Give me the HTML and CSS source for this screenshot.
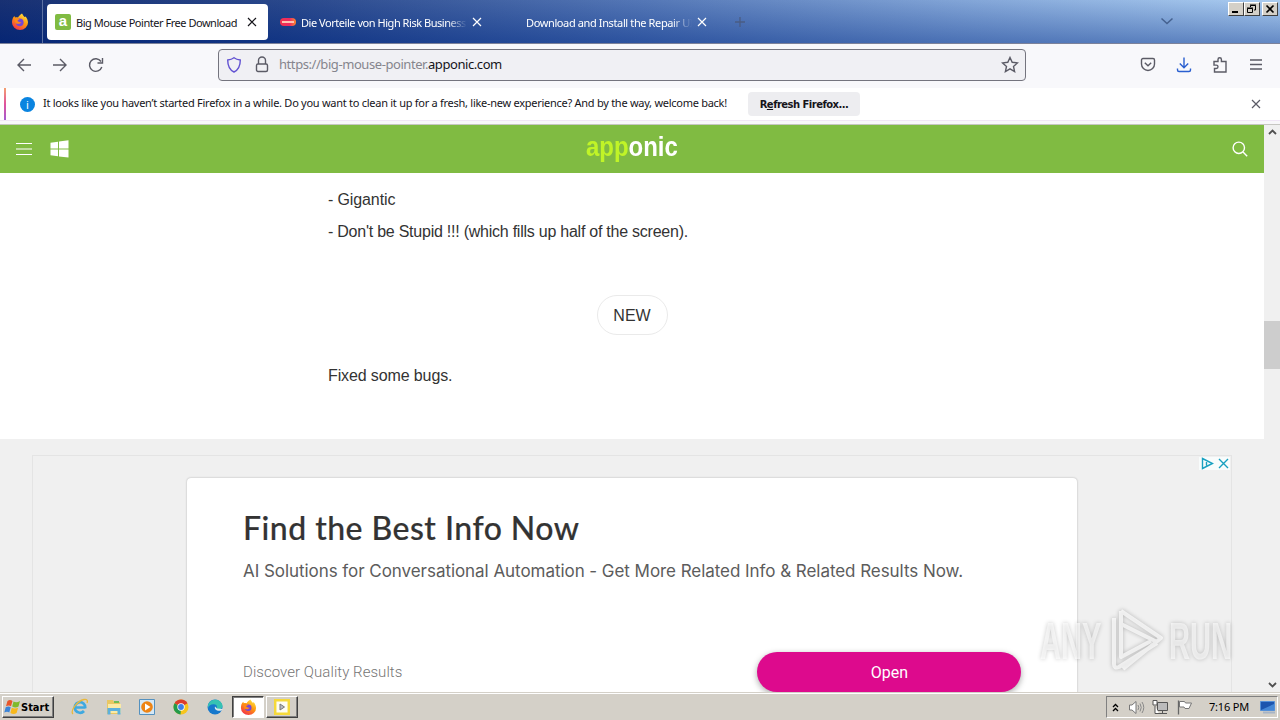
FILE: index.html
```html
<!DOCTYPE html>
<html lang="en">
<head>
    <meta charset="UTF-8">
    <title>Big Mouse Pointer Free Download</title>
    <link rel="stylesheet" href="styles.css">
</head>
<body>
    <div class="tabs">
        <div class="fx">
            <svg width="18" height="18" viewBox="0 0 18 18">
                <defs>
                    <linearGradient id="fire" x1="0.8" y1="0" x2="0.2" y2="1">
                        <stop offset="0" stop-color="#ffe847"/>
                        <stop offset="0.45" stop-color="#ff980e"/>
                        <stop offset="1" stop-color="#f3294f"/>
                    </linearGradient>
                </defs>
                <path fill="url(#fire)" d="M11 0.5c1 1.500 1.500 2.500 2.500 3.500l1-0.500c1.500 1.500 2.500 4 2.500 6a8 7.500 0 0 1-16 0c0-2.500 0.500-5 2.500-6.500l0.500 1.500c1-0.500 2-0.500 3 0 1-2 2.500-3 4-4z"/>
                <circle cx="8.700" cy="9.300" r="3.900" fill="#7546d8"/>
                <path fill="#ff8a16" d="M3.500 6c2-1.500 4-0.500 5 0.500-1 0.300-2 0.500-2 1.500 1 1 2.500 1.500 4 1-1 2-4 2.500-6 1z"/>
            </svg>
        </div>
        <div class="tab active">
            <span class="favicon">a</span>
            <span class="title t1">Big Mouse Pointer Free Download</span>
            <svg class="x" width="10" height="10" viewBox="0 0 10 10"><path d="M1 1l8 8M9 1l-8 8"/></svg>
        </div>
        <div class="tab tab2">
            <span class="pill"><i></i></span>
            <span class="title fade t2">Die Vorteile von High Risk Business</span>
            <svg class="x" width="10" height="10" viewBox="0 0 10 10"><path d="M1 1l8 8M9 1l-8 8"/></svg>
        </div>
        <div class="tab tab3">
            <span class="title fade t3">Download and Install the Repair UI</span>
            <svg class="x" width="10" height="10" viewBox="0 0 10 10"><path d="M1 1l8 8M9 1l-8 8"/></svg>
        </div>
        <svg class="plus" width="12" height="12" viewBox="0 0 12 12"><path d="M6 1v10M1 6h10"/></svg>
        <svg class="chevron" width="14" height="9" viewBox="0 0 14 9"><path d="M1.500 1.500l5.500 5 5.500-5"/></svg>
        <div class="winbtns">
            <span><svg width="14" height="12" viewBox="0 0 14 12"><path d="M3 9h6" stroke-width="2"/></svg></span>
            <span><svg width="14" height="12" viewBox="0 0 14 12"><path d="M5.500 4V2.500h5v4.500H9M2.500 5.500h5v4h-5zM5 2h6M2 5h6"/></svg></span>
            <span class="last"><svg width="14" height="12" viewBox="0 0 14 12"><path d="M3.500 2.500l7 7M10.500 2.500l-7 7" stroke-width="1.700"/></svg></span>
        </div>
    </div>

    <div class="toolbar">
        <div class="nav">
            <svg width="16" height="16" viewBox="0 0 16 16"><path d="M15 8H2M8 2L2 8l6 6"/></svg>
            <svg width="16" height="16" viewBox="0 0 16 16"><path d="M1 8h13M8 2l6 6-6 6"/></svg>
            <svg width="16" height="16" viewBox="0 0 16 16"><path d="M13.800 10A6.300 6.300 0 1 1 13 4.500M14.500 1v5h-5"/></svg>
        </div>
        <div class="urlbar">
            <svg class="shield" width="16" height="18" viewBox="0 0 16 18"><path d="M8 1.700c2 1.500 4 2 6.300 2.300 0 5.500-1 9.500-6.300 12-5.300-2.500-6.300-6.500-6.300-12C4 3.700 6 3.200 8 1.700z"/></svg>
            <svg class="lock" width="14" height="17" viewBox="0 0 14 17"><path d="M3.500 8V4.500a3.500 3.500 0 0 1 7 0V8"/><rect x="1.500" y="8" width="11" height="7.500" rx="1.500"/></svg>
            <span class="url">https://big-mouse-pointer.<b>apponic.com</b></span>
            <svg class="star" width="18" height="17" viewBox="0 0 18 17"><path d="M9 1.500l2.200 4.800 5.200 0.600-3.900 3.500 1.100 5.100L9 12.900l-4.600 2.600 1.100-5.100L1.600 6.900l5.200-0.600z"/></svg>
        </div>
        <div class="tools">
            <svg width="16" height="16" viewBox="0 0 16 16"><path d="M3 1.500h10a1.500 1.500 0 0 1 1.500 1.500v4a6.500 6.500 0 0 1-13 0V3A1.500 1.500 0 0 1 3 1.500zM4.800 5.700L8 8.700l3.200-3"/></svg>
            <svg class="dl" width="16" height="16" viewBox="0 0 16 16"><path d="M8 0.500v10M3.800 6.500L8 10.700l4.200-4.200M1.500 11.500v1.500a1.500 1.500 0 0 0 1.500 1.500h10a1.500 1.500 0 0 0 1.500-1.500v-1.500"/></svg>
            <svg width="16" height="18" viewBox="0 0 16 18"><path d="M2 5.500h4V3.500a1.700 1.700 0 0 1 3.400 0v2h4.600v10.500H2.500v-3.500h1.800a1.700 1.700 0 0 0 0-3.400H2z"/></svg>
            <svg width="16" height="16" viewBox="0 0 16 16"><path d="M2 3h12M2 7.500h12M2 12h12"/></svg>
        </div>
    </div>

    <div class="notice">
        <span class="info">i</span>
        <span class="msg">It looks like you haven’t started Firefox in a while. Do you want to clean it up for a fresh, like-new experience? And by the way, welcome back!</span>
        <span class="refresh">R<u>e</u>fresh Firefox...</span>
        <svg class="x" width="10" height="10" viewBox="0 0 10 10"><path d="M1 1l8 8M9 1l-8 8"/></svg>
    </div>

    <div class="view">
        <div class="page">
            <div class="header">
                <svg width="16" height="12" viewBox="0 0 16 12"><path d="M0 0.500h16M0 6h16M0 11.500h16" stroke="#fff"/></svg>
                <svg class="windows" width="19" height="18" viewBox="0 0 19 18"><path fill="#fff" d="M0.500 2.800l7.500-1V8.400H0.500zM9 1.600L18.500 0.300v8.100H9zM0.500 9.400H8v6.800l-7.500-1zM9 9.400h9.500v8.200L9 16.400z"/></svg>
                <div class="logo"><span>app</span>onic</div>
                <svg class="search" width="16" height="16" viewBox="0 0 16 16"><circle cx="6.800" cy="6.800" r="5.700"/><path d="M11 11l4.200 4.200"/></svg>
            </div>
            <div class="article">
                <p>- Gigantic</p>
                <p class="p2">- Don't be Stupid !!! (which fills up half of the screen).</p>
                <div class="new"><span>NEW</span></div>
                <p class="p3">Fixed some bugs.</p>
            </div>
            <div class="adwrap">
                <div class="adframe">
                    <div class="adchoices">
                        <svg width="13" height="13" viewBox="0 0 13 13"><path d="M1.500 1.500v10L11.500 6.500zM5.500 5v3.500"/></svg>
                        <svg width="13" height="13" viewBox="0 0 13 13"><path d="M2 2l9 9M11 2l-9 9"/></svg>
                    </div>
                    <div class="card">
                        <h2>Find the Best Info Now</h2>
                        <p class="desc">AI Solutions for Conversational Automation - Get More Related Info &amp; Related Results Now.</p>
                        <div class="cardfoot">
                            <span class="brand">Discover Quality Results</span>
                            <span class="open">Open</span>
                        </div>
                    </div>
                </div>
            </div>
        </div>
        <div class="scrollbar">
            <svg width="9" height="6" viewBox="0 0 9 6"><path d="M1 5l3.500-3.500L8 5"/></svg>
            <div class="thumb"></div>
            <svg width="9" height="6" viewBox="0 0 9 6"><path d="M1 1l3.500 3.500L8 1"/></svg>
        </div>
    </div>

    <div class="watermark">
        <span class="any">ANY</span>
        <svg width="60" height="68" viewBox="0 0 60 68">
            <path d="M14 4L54 31 16 62M7 11v46q0 5 5 3L50 36M14 4v46L44 34M14 17l36 18"/>
        </svg>
        <span class="run">RUN</span>
    </div>

    <div class="taskbar">
        <div class="startbtn">
            <svg width="17" height="16" viewBox="0 0 17 16">
                <path fill="#e8562a" d="M3.500 2C5.500 0.500 7 1 8.500 2L7 7.200c-1.500-1-3-1-5 0z"/>
                <path fill="#7fba2c" d="M9.500 2.500c2 1 4 1 6.500-0.500l-1.500 5.500c-2 1.200-4 1.200-6.300 0z"/>
                <path fill="#3b84d8" d="M1.700 8.300c2-1 3.500-1 5 0L5.300 13.500c-1.500-1-3-1-5 0z"/>
                <path fill="#f7b81c" d="M7.800 8.700c2 1 4 1 6.300 0l-1.500 5.300c-2 1.200-4 1.200-6.200 0z"/>
            </svg>
            <span>Start</span>
        </div>
        <div class="apps">
            <svg width="18" height="18" viewBox="0 0 18 18">
                <path d="M14.500 9.500H4.500M14.300 10A5.300 5.300 0 1 0 13 13" fill="none" stroke="#3fa9e0" stroke-width="2.700"/>
                <path d="M2 16C-1 13 6 3 13 1.500c3-0.600 4 1 3 3.500" fill="none" stroke="#e9b83b" stroke-width="1.300"/>
            </svg>
            <svg width="18" height="18" viewBox="0 0 18 18">
                <path fill="#e9c763" d="M2 2h6l1 2h6v12H2z"/>
                <path fill="#fbeaa5" d="M3 6h13v9H3z"/>
                <path fill="#5cb0dd" d="M2.500 10h13v6.500h-3V13h-7v3.500h-3z"/>
                <path fill="#6fbd55" d="M9 3h5v2H9z"/>
            </svg>
            <svg width="18" height="18" viewBox="0 0 18 18">
                <path fill="#d5e8f6" stroke="#5491bf" d="M1.500 1.500h15v15h-15z"/>
                <circle cx="9" cy="9" r="5.800" fill="#ee8414"/>
                <path fill="#fff" d="M7 5.500v7L12.500 9z"/>
            </svg>
            <svg width="18" height="18" viewBox="0 0 18 18">
                <circle cx="9" cy="9" r="7.500" fill="#f7c51e"/>
                <path fill="#dc3c2e" d="M9 9L2.500 5.200A7.500 7.500 0 0 1 15.500 5.200z"/>
                <path fill="#249a4b" d="M9 9L8.500 16.500A7.500 7.500 0 0 1 2.500 5.200z"/>
                <circle cx="9" cy="9" r="3.700" fill="#fff"/>
                <circle cx="9" cy="9" r="2.900" fill="#3f7fe8"/>
            </svg>
            <svg width="18" height="18" viewBox="0 0 18 18">
                <circle cx="9" cy="9" r="7.500" fill="#1678cc"/>
                <path fill="#36c2b3" d="M2 7C4 0 15 0 16.500 7.500c0.500 3-3 4.500-6 3.500 1-2 0.500-4.500-2.500-4.800C5 6 3 7 2 10z"/>
                <path fill="#dce9ec" d="M9 8.500c-1 3 2 5 6.500 4L17 11 11 10.500z"/>
            </svg>
            <div class="task pressed">
                <svg width="17" height="17" viewBox="0 0 18 18">
                    <path fill="url(#fire)" d="M11 0.500c1 1.500 1.500 2.500 2.500 3.500l1-0.500c1.500 1.500 2.500 4 2.500 6a8 7.500 0 0 1-16 0c0-2.500 0.500-5 2.500-6.500l0.500 1.500c1-0.500 2-0.500 3 0 1-2 2.500-3 4-4z"/>
                    <circle cx="8.700" cy="9.300" r="3.500" fill="#7546d8"/>
                    <path fill="#ff8a16" d="M3.500 6c2-1.500 4-0.500 5 0.500-1 0.300-2 0.500-2 1.500 1 1 2.500 1.500 4 1-1 2-4 2.500-6 1z"/>
                </svg>
            </div>
            <div class="task">
                <svg width="16" height="16" viewBox="0 0 16 16"><path fill="#fdfdf4" stroke="#f5d93a" stroke-width="2.500" d="M1.200 1.200h13.600v13.600H1.200z"/><path fill="#b8bcc4" stroke="#777" d="M6 5v6l4.500-3z"/></svg>
            </div>
        </div>
        <div class="tray">
            <svg width="7" height="9" viewBox="0 0 7 9"><path d="M1 4l2.500-2.500L6 4M1 8l2.500-2.500L6 8" fill="none" stroke="#000" stroke-width="1.300"/></svg>
            <svg class="snd" width="17" height="15" viewBox="0 0 17 15"><path d="M1.500 5h2.500L8 1.500v12L4 10H1.500z" fill="#fff" stroke="#777"/><path d="M10 5q1.500 2.500 0 5M12 3.500q2.500 4 0 8M14 2q3.500 5.500 0 11" fill="none" stroke="#888"/></svg>
            <svg class="net" width="17" height="16" viewBox="0 0 17 16"><path d="M5.500 3.500h10v8h-10z" fill="#bbb" stroke="#555"/><path d="M7 14.500h8M10.500 12v2M3 7v7.500h4M1 1.500h4v4.500H1z" fill="#fff" stroke="#555"/></svg>
            <svg class="flag" width="16" height="15" viewBox="0 0 16 15"><path d="M1.500 0.500v14" stroke="#666" stroke-width="1.300"/><path d="M2.500 1.500h5l1 1.500h6l-2.500 5.500H8l-1-1.500H2.500z" fill="#fff" stroke="#777"/></svg>
            <span class="clock">7:16 PM</span>
            <svg class="desk" width="16" height="13" viewBox="0 0 16 13"><path fill="#1d55ae" stroke="#5590d8" d="M0.500 0.500h14v9h-14z"/><path fill="#4587d6" d="M1 9L14 3v6z"/><path stroke="#a7b4c6" stroke-width="2" d="M3 11.500h12"/></svg>
        </div>
    </div>
</body>
</html>
```
FILE: styles.css
```css
*{
    box-sizing: border-box;
}
body{
    margin: 0;
    width: 1280px;
    height: 720px;
    overflow: hidden;
    display: flex;
    flex-direction: column;
    font-family: "Noto Sans", sans-serif;
    font-size: 11px;
    color: #15141a;
    white-space: nowrap;
}
svg{
    flex: none;
    display: block;
}
p, h2{
    margin: 0;
}

/* tab strip */
.tabs{
    height: 44px;
    flex: none;
    display: flex;
    align-items: center;
    border-bottom: 1px solid #7c829a;
    background: linear-gradient(180deg, rgba(255,255,255,0.06), rgba(0,40,130,0.4)), linear-gradient(97deg, #0a246a 0%, #1c3c84 22%, #4a6fb2 50%, #7ba0d5 75%, #a6caf0 100%);
}
.fx{
    width: 43px;
    height: 43px;
    padding: 13px 0 0 11px;
    border-right: 1px solid #5c71a3;
}
.tab{
    height: 36px;
    display: flex;
    align-items: center;
    color: #fff;
}
.tab.active{
    width: 221px;
    margin-left: 4px;
    padding-left: 8px;
    background: #fff;
    border-radius: 4px;
    color: #15141a;
}
.favicon{
    width: 16px;
    height: 16px;
    background: #80bb42;
    border-radius: 2px;
    color: #fff;
    font: bold 15px/14px "Liberation Sans", sans-serif;
    text-align: center;
}
.title{
    overflow: hidden;
    margin-left: 5px;
    padding-top: 2px;
    letter-spacing: -0.38px;
}
.t1{
    width: 166px;
    letter-spacing: -0.47px;
}
.t2{
    width: 166px;
    letter-spacing: -0.46px;
}
.t3{
    width: 166px;
    margin-left: 0;
}
.fade{
    -webkit-mask-image: linear-gradient(90deg, #000 88%, transparent);
    mask-image: linear-gradient(90deg, #000 88%, transparent);
}
.x{
    fill: none;
    stroke: currentColor;
    stroke-width: 1.2;
    margin-left: 5px;
}
.tab2{
    margin-left: 12px;
}
.pill{
    width: 16px;
    height: 8px;
    padding: 3px 2px;
    border-radius: 4px;
    background: linear-gradient(90deg, #f2334c, #ee2a62 60%, #ff8a2a);
}
.pill i{
    display: block;
    height: 2px;
    background: #ffc3b0;
}
.tab3{
    margin-left: 44px;
}
.plus{
    margin-left: 27px;
    fill: none;
    stroke: #4a5c84;
    stroke-width: 1.3;
}
.chevron{
    margin-left: 414px;
    fill: none;
    stroke: #45618f;
    stroke-width: 1.5;
}
.winbtns{
    display: flex;
    align-self: flex-start;
    margin: 2px 0 0 54px;
}
.winbtns span{
    width: 16px;
    height: 14px;
    background: #d4d0c8;
    border: 1px solid;
    border-color: #fff #404040 #404040 #fff;
}
.winbtns .last{
    margin-left: 2px;
}
.winbtns svg{
    fill: none;
    stroke: #000;
}

/* toolbar */
.toolbar{
    height: 44px;
    flex: none;
    display: flex;
    align-items: center;
    padding-bottom: 3px;
    background: #f8f8fb;
}
.nav, .tools{
    display: flex;
    align-items: center;
    gap: 20px;
    fill: none;
    stroke: #5b5b66;
    stroke-width: 1.4;
}
.nav{
    width: 218px;
    padding-left: 16px;
}
.urlbar{
    width: 808px;
    height: 32px;
    display: flex;
    align-items: center;
    padding: 0 6px 0 7px;
    background: #f0f0f4;
    border: 1px solid #74747e;
    border-radius: 4px;
    font-size: 13px;
    letter-spacing: -0.43px;
}
.urlbar svg{
    fill: none;
    stroke: #5b5b66;
    stroke-width: 1.4;
}
.urlbar .shield{
    stroke: #6252d2;
}
.urlbar .lock{
    margin-left: 13px;
}
.url{
    margin-left: 10px;
    padding-bottom: 1px;
    color: #85858d;
}
.url b{
    font-weight: normal;
    color: #15141a;
}
.urlbar .star{
    margin-left: auto;
}
.tools{
    margin-left: 114px;
}
.tools .dl{
    stroke: #2a5fd0;
}

/* notification */
.notice{
    height: 37px;
    flex: none;
    display: flex;
    align-items: center;
    padding: 0 0 5px 16px;
    position: relative;
    background: linear-gradient(#fff 32px, #f0e6f6 32px, #f0e6f6 33px, #f8f7fa 33px, #f8f7fa 36px, #c6c6c2 36px);
}
.notice::before{
    content: "";
    position: absolute;
    left: 4px;
    top: 0;
    width: 2px;
    height: 32px;
    background: linear-gradient(#f4a070, #e0529c 50%, #a45cd0);
}
.info{
    width: 15px;
    height: 15px;
    margin-left: 4px;
    border-radius: 50%;
    background: #0a84e0;
    color: #fff;
    line-height: 15px;
    text-align: center;
}
.msg{
    width: 685px;
    margin-left: 8px;
    padding-bottom: 3px;
    letter-spacing: -0.268px;
}
.refresh{
    width: 112px;
    height: 24px;
    margin-left: 20px;
    background: #ededf0;
    border-radius: 4px;
    font: bold 10px/25px "DejaVu Sans", sans-serif;
    letter-spacing: -0.53px;
    text-align: center;
}
.notice .x{
    margin-left: 391px;
    stroke: #5b5b66;
}

/* page */
.view{
    height: 567px;
    flex: none;
    display: flex;
    overflow: hidden;
    background: #fff;
    font-family: "Liberation Sans", Arial, sans-serif;
}
.page{
    width: 1264px;
}
.header{
    height: 48px;
    display: flex;
    align-items: center;
    padding: 0 16px;
    background: #80bb42;
}
.windows{
    margin-left: 18px;
}
.logo{
    width: 92px;
    margin: -4px 0 0 517px;
    color: #fff;
    font-size: 28px;
    font-weight: bold;
    line-height: 32px;
    transform: scaleX(0.855);
    transform-origin: 0 0;
}
.logo span{
    color: #c0f427;
}
.search{
    margin-left: auto;
    fill: none;
    stroke: #fff;
    stroke-width: 1.4;
}
.article{
    height: 266px;
    padding: 11px 0 0 328px;
    font-size: 16px;
    line-height: 32px;
    letter-spacing: -0.12px;
    color: #333;
}
.p2{
    letter-spacing: -0.24px;
}
.new{
    margin: 47px 0 25px -328px;
    display: flex;
    justify-content: center;
    letter-spacing: 0;
}
.new span{
    width: 71px;
    height: 40px;
    border: 1px solid #eaeaea;
    border-radius: 20px;
    line-height: 40px;
    text-align: center;
}
.adwrap{
    height: 260px;
    padding: 16px 32px 0;
    background: #f0f0f0;
}
.adframe{
    width: 1200px;
    height: 260px;
    padding: 22px 0 0 154px;
    position: relative;
    border: 1px solid #e4e4e4;
}
.adchoices{
    position: absolute;
    top: 1px;
    right: 1px;
    display: flex;
    gap: 3px;
    padding-left: 2px;
    background: #f8fcfc;
    fill: none;
    stroke: #18a0c0;
    stroke-width: 1.4;
}
.card{
    width: 890px;
    height: 250px;
    padding: 30px 56px 0;
    background: #fff;
    border-radius: 4px;
    box-shadow: 0 0 2px rgba(0,0,0,0.3);
}
.card h2{
    font-family: Lato, sans-serif;
    font-size: 32px;
    font-weight: 500;
    line-height: 40px;
    letter-spacing: 0.47px;
    color: #333;
    -webkit-text-stroke: 0.2px #333;
}
.desc{
    margin-top: 10px;
    padding-top: 1px;
    font-family: Inter, sans-serif;
    font-size: 17px;
    line-height: 25px;
    letter-spacing: -0.05px;
    color: #5c5c5c;
}
.cardfoot{
    display: flex;
    align-items: center;
    justify-content: space-between;
    margin-top: 68px;
}
.brand{
    font-family: Roboto, sans-serif;
    font-size: 15px;
    font-weight: 300;
    letter-spacing: 0.05px;
    color: #757575;
}
.open{
    width: 264px;
    height: 40px;
    padding-left: 1px;
    border-radius: 20px;
    background: #dd0a8d;
    box-shadow: 0 2px 6px rgba(0,0,0,0.35);
    color: #fff;
    font-family: Roboto, sans-serif;
    font-size: 16px;
    line-height: 42px;
    text-align: center;
}
.scrollbar{
    width: 16px;
    height: 567px;
    display: flex;
    flex-direction: column;
    align-items: center;
    justify-content: space-between;
    padding: 4px 0;
    background: #f0f0f0;
    fill: none;
    stroke: #505050;
    stroke-width: 1.8;
}
.thumb{
    width: 16px;
    height: 48px;
    margin-top: -128px;
    background: #cdcdcd;
}

/* watermark */
.watermark{
    position: absolute;
    left: 1040px;
    top: 606px;
    width: 196px;
    height: 70px;
    display: flex;
    align-items: center;
    color: rgba(255,255,255,0.6);
    font: bold 52px/70px "Liberation Sans", sans-serif;
    filter: drop-shadow(0 0 2px rgba(0,0,0,0.35));
}
.watermark span{
    width: 64px;
    transform: scaleX(0.56);
    transform-origin: 0 0;
}
.watermark svg{
    margin-left: 3px;
    fill: none;
    stroke: rgba(255,255,255,0.7);
    stroke-width: 4;
    stroke-linejoin: round;
}
.watermark .run{
    margin-left: 2px;
}

/* taskbar */
.taskbar{
    height: 28px;
    flex: none;
    display: flex;
    align-items: center;
    padding: 1px 2px 0;
    background: #d4d0c8;
    border-top: 1px solid #d4d0c8;
    box-shadow: inset 0 1px 0 #fff;
}
.startbtn{
    width: 52px;
    height: 22px;
    display: flex;
    align-items: center;
    padding-left: 1px;
    border: 1px solid;
    border-color: #fff #404040 #404040 #fff;
    box-shadow: inset -1px -1px 0 #808080;
    font: bold 11px "DejaVu Sans Condensed", "DejaVu Sans", sans-serif;
    color: #000;
}
.apps{
    display: flex;
    align-items: center;
    margin-left: 17px;
    gap: 15.7px;
}
.task{
    width: 32px;
    height: 22px;
    display: flex;
    align-items: center;
    justify-content: center;
    border: 1px solid;
    border-color: #fff #404040 #404040 #fff;
    box-shadow: inset -1px -1px 0 #808080;
    margin-left: -13.7px;
}
.task.pressed{
    margin-left: -7px;
    background: #fff;
    border-color: #404040 #fff #fff #404040;
    box-shadow: inset 1px 1px 0 #808080;
}
.tray{
    width: 172px;
    height: 22px;
    display: flex;
    align-items: center;
    margin-left: auto;
    padding-left: 5px;
    border: 1px solid;
    border-color: #808080 #fff #fff #808080;
    color: #000;
}
.snd{
    margin-left: 9px;
}
.net{
    margin-left: 7px;
}
.flag{
    margin-left: 8px;
}
.clock{
    width: 40px;
    margin-left: 16px;
    padding-bottom: 1px;
    letter-spacing: -0.2px;
}
.desk{
    margin-left: 11px;
}
```
